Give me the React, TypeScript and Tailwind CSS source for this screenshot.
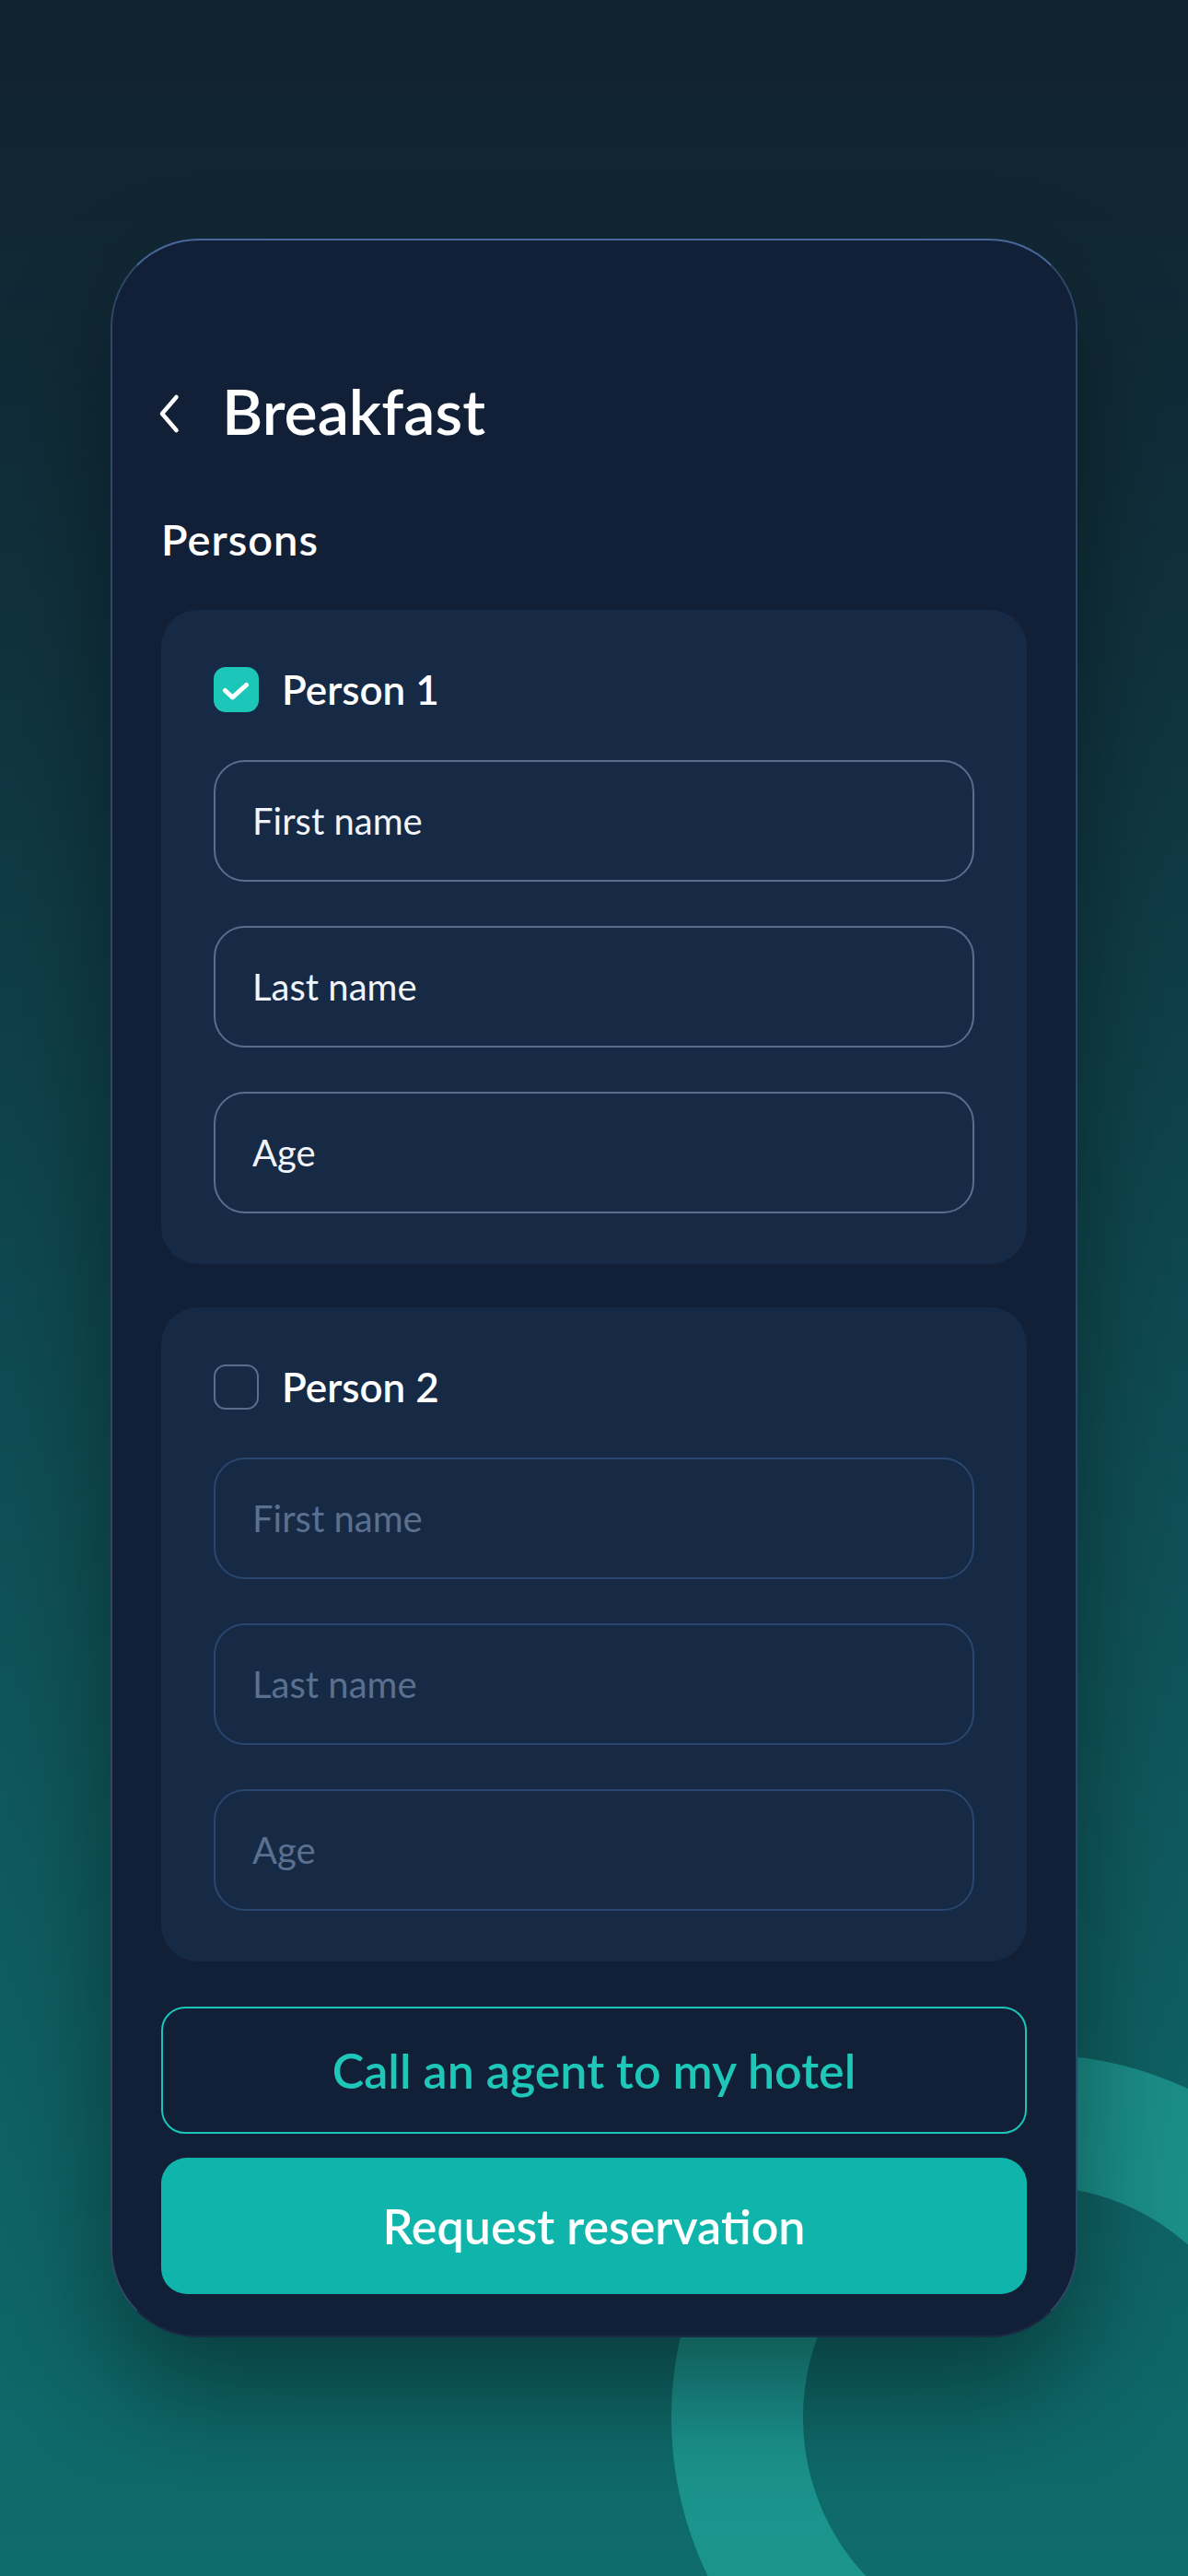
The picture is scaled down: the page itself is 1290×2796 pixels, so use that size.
import React from "react";

type PersonCardProps = {
  label: string;
  active: boolean;
};

function CheckMark() {
  return (
    <svg width="49" height="49" viewBox="0 0 49 49" fill="none">
      <path
        d="M12.5 25.5 L20.5 33 L35.5 19.5"
        stroke="#ffffff"
        strokeWidth="5"
        strokeLinecap="round"
        strokeLinejoin="round"
      />
    </svg>
  );
}

function PersonCard({ label, active }: PersonCardProps) {
  const fields = ["First name", "Last name", "Age"];
  return (
    <div className="rounded-[40px] bg-[#162a46] px-[57px] pt-[60px] pb-[55px]">
      <div className="flex h-[53px] items-center gap-[25px]">
        {active ? (
          <div className="flex h-[49px] w-[49px] items-center justify-center rounded-[13px] bg-[#1cc6b8]">
            <CheckMark />
          </div>
        ) : (
          <div className="h-[49px] w-[49px] rounded-[13px] border-2 border-[#5a6e8c]" />
        )}
        <span className="text-[44px] leading-[53px] font-semibold text-white">{label}</span>
      </div>
      <div className="mt-[50px] flex flex-col gap-[48px]">
        {fields.map((f) =>
          active ? (
            <input
              key={f}
              readOnly
              placeholder={f}
              className="h-[132px] w-full rounded-[34px] border-2 border-[#5a6e8c] bg-transparent px-[40px] text-[40px] leading-[48px] text-[#f1f5f9] outline-none placeholder:text-[#f1f5f9]"
            />
          ) : (
            <input
              key={f}
              readOnly
              placeholder={f}
              className="h-[132px] w-full rounded-[34px] border-2 border-[#2a4770] bg-transparent px-[40px] text-[40px] leading-[48px] text-[#5b6f8e] outline-none placeholder:text-[#5b6f8e]"
            />
          )
        )}
      </div>
    </div>
  );
}

export default function App() {
  return (
    <div className="relative h-[2796px] w-[1290px] overflow-hidden bg-[linear-gradient(180deg,#11212e_0%,#10323e_25%,#0f4850_50%,#0f5c5f_75%,#0f6c6c_100%)] font-['Lato','Noto_Sans',sans-serif]">
      {/* decorative ring behind the phone */}
      <div className="absolute left-[729px] top-[2230px] h-[788px] w-[788px] rounded-full border-[143px] border-[rgba(45,205,190,0.42)]" />

      <div className="relative flex justify-center pt-[259px]">
        <div className="w-[1050px] rounded-[96px] border-2 border-[#2f4766] border-t-[#48689a] border-b-[#1a2a44] bg-[#111f37] px-[53px] pt-[144px] pb-[45px] shadow-[0_60px_120px_rgba(0,0,0,0.4)]">
          <div className="flex h-[82px] items-center">
            <svg className="ml-[-3px] mt-[6px]" width="24" height="44" viewBox="0 0 24 44" fill="none">
              <path
                d="M19.5 4 L4 22 L19.5 40"
                stroke="#ffffff"
                strokeWidth="4.5"
                strokeLinecap="round"
                strokeLinejoin="round"
              />
            </svg>
            <h1 className="ml-[45px] text-[68px] leading-[82px] font-semibold text-white">Breakfast</h1>
          </div>

          <h2 className="mt-[72px] text-[47px] leading-[53px] font-semibold tracking-[1px] text-white">Persons</h2>

          <div className="mt-[50px]">
            <PersonCard label="Person 1" active />
          </div>
          <div className="mt-[47px]">
            <PersonCard label="Person 2" active={false} />
          </div>

          <button className="mt-[49px] flex h-[138px] w-full items-center justify-center rounded-[26px] border-2 border-[#1cc5b7] text-[52px] leading-[60px] font-semibold text-[#1fc7b9]">
            Call an agent to my hotel
          </button>
          <button className="mt-[26px] flex h-[148px] w-full items-center justify-center rounded-[28px] bg-[#0fb5aa] text-[52px] leading-[60px] font-semibold text-white">
            Request reservation
          </button>
        </div>
      </div>
    </div>
  );
}
